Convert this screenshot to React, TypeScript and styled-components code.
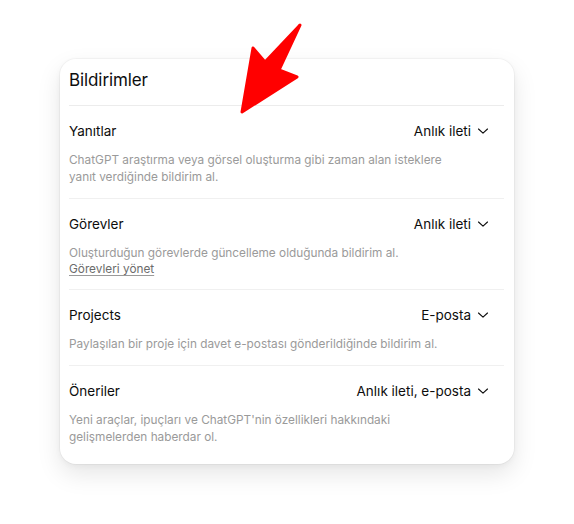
import styled, { createGlobalStyle } from "styled-components";

const GlobalStyle = createGlobalStyle`
  html, body {
    margin: 0;
    padding: 0;
    background: #ffffff;
  }
  body {
    font-family: Inter, "Noto Sans", "Liberation Sans", sans-serif;
    color: #0d0d0d;
    -webkit-font-smoothing: antialiased;
  }
`;

const Page = styled.div`
  position: relative;
  width: 574px;
  height: 524px;
  padding: 59px 0 0 60px;
  box-sizing: border-box;
`;

const Card = styled.div`
  width: 454px;
  box-sizing: border-box;
  padding: 9px 10px 6px 9px;
  background: #ffffff;
  border-radius: 16px;
  box-shadow: 0 0 0 1px rgba(0, 0, 0, 0.03), 0 10px 24px rgba(0, 0, 0, 0.1),
    0 2px 6px rgba(0, 0, 0, 0.04);
`;

const Title = styled.h2`
  margin: 0;
  padding: 0 0 13px;
  font-size: 17px;
  line-height: 24px;
  font-weight: 400;
  letter-spacing: -0.1px;
  border-bottom: 1px solid #ececec;
`;

const Row = styled.div<{ $last?: boolean }>`
  display: flex;
  flex-direction: column;
  gap: 11px;
  padding: 15px 0 12px;
  border-bottom: ${(p) => (p.$last ? "none" : "1px solid #f0f0f0")};
`;

const RowHead = styled.div`
  display: flex;
  align-items: center;
  justify-content: space-between;
  height: 20px;
`;

const Label = styled.span`
  font-size: 13.5px;
  line-height: 20px;
`;

const Select = styled.button`
  display: flex;
  align-items: center;
  gap: 6px;
  padding: 0 15px 0 0;
  border: none;
  background: none;
  font-family: inherit;
  font-size: 13.5px;
  line-height: 20px;
  color: #0d0d0d;
  cursor: pointer;
`;

const Desc = styled.div`
  font-size: 11.8px;
  line-height: 17px;
  color: #9a9a9a;
  max-width: 385px;
`;

const Link = styled.a`
  display: block;
  width: fit-content;
  line-height: 15px;
  color: #6b6b6b;
  text-decoration: underline;
  text-underline-offset: 2px;
  text-decoration-color: #9a9a9a;
`;

const Arrow = styled.svg`
  position: absolute;
  left: 0;
  top: 0;
  pointer-events: none;
`;

function Chevron() {
  return (
    <svg width="12" height="12" viewBox="0 0 12 12" fill="none">
      <path
        d="M1.5 4 L6 8.2 L10.5 4"
        stroke="#0d0d0d"
        strokeWidth="1.1"
        strokeLinecap="round"
        strokeLinejoin="round"
      />
    </svg>
  );
}

interface Setting {
  label: string;
  value: string;
  desc: string;
  link?: string;
}

const settings: Setting[] = [
  {
    label: "Yanıtlar",
    value: "Anlık ileti",
    desc: "ChatGPT araştırma veya görsel oluşturma gibi zaman alan isteklere yanıt verdiğinde bildirim al.",
  },
  {
    label: "Görevler",
    value: "Anlık ileti",
    desc: "Oluşturduğun görevlerde güncelleme olduğunda bildirim al.",
    link: "Görevleri yönet",
  },
  {
    label: "Projects",
    value: "E-posta",
    desc: "Paylaşılan bir proje için davet e-postası gönderildiğinde bildirim al.",
  },
  {
    label: "Öneriler",
    value: "Anlık ileti, e-posta",
    desc: "Yeni araçlar, ipuçları ve ChatGPT'nin özellikleri hakkındaki gelişmelerden haberdar ol.",
  },
];

export default function App() {
  return (
    <>
      <GlobalStyle />
      <Page>
        <Card>
          <Title>Bildirimler</Title>
          {settings.map((s, i) => (
            <Row key={s.label} $last={i === settings.length - 1}>
              <RowHead>
                <Label>{s.label}</Label>
                <Select>
                  {s.value}
                  <Chevron />
                </Select>
              </RowHead>
              <Desc>
                <div>{s.desc}</div>
                {s.link && <Link href="#">{s.link}</Link>}
              </Desc>
            </Row>
          ))}
        </Card>
        <Arrow width="574" height="524" viewBox="0 0 574 524">
          <polygon
            points="300,25 279,70 297,77 242,112 253,48 265,62"
            fill="#ff0000"
            stroke="#ff0000"
            strokeWidth="3"
            strokeLinejoin="round"
          />
        </Arrow>
      </Page>
    </>
  );
}
